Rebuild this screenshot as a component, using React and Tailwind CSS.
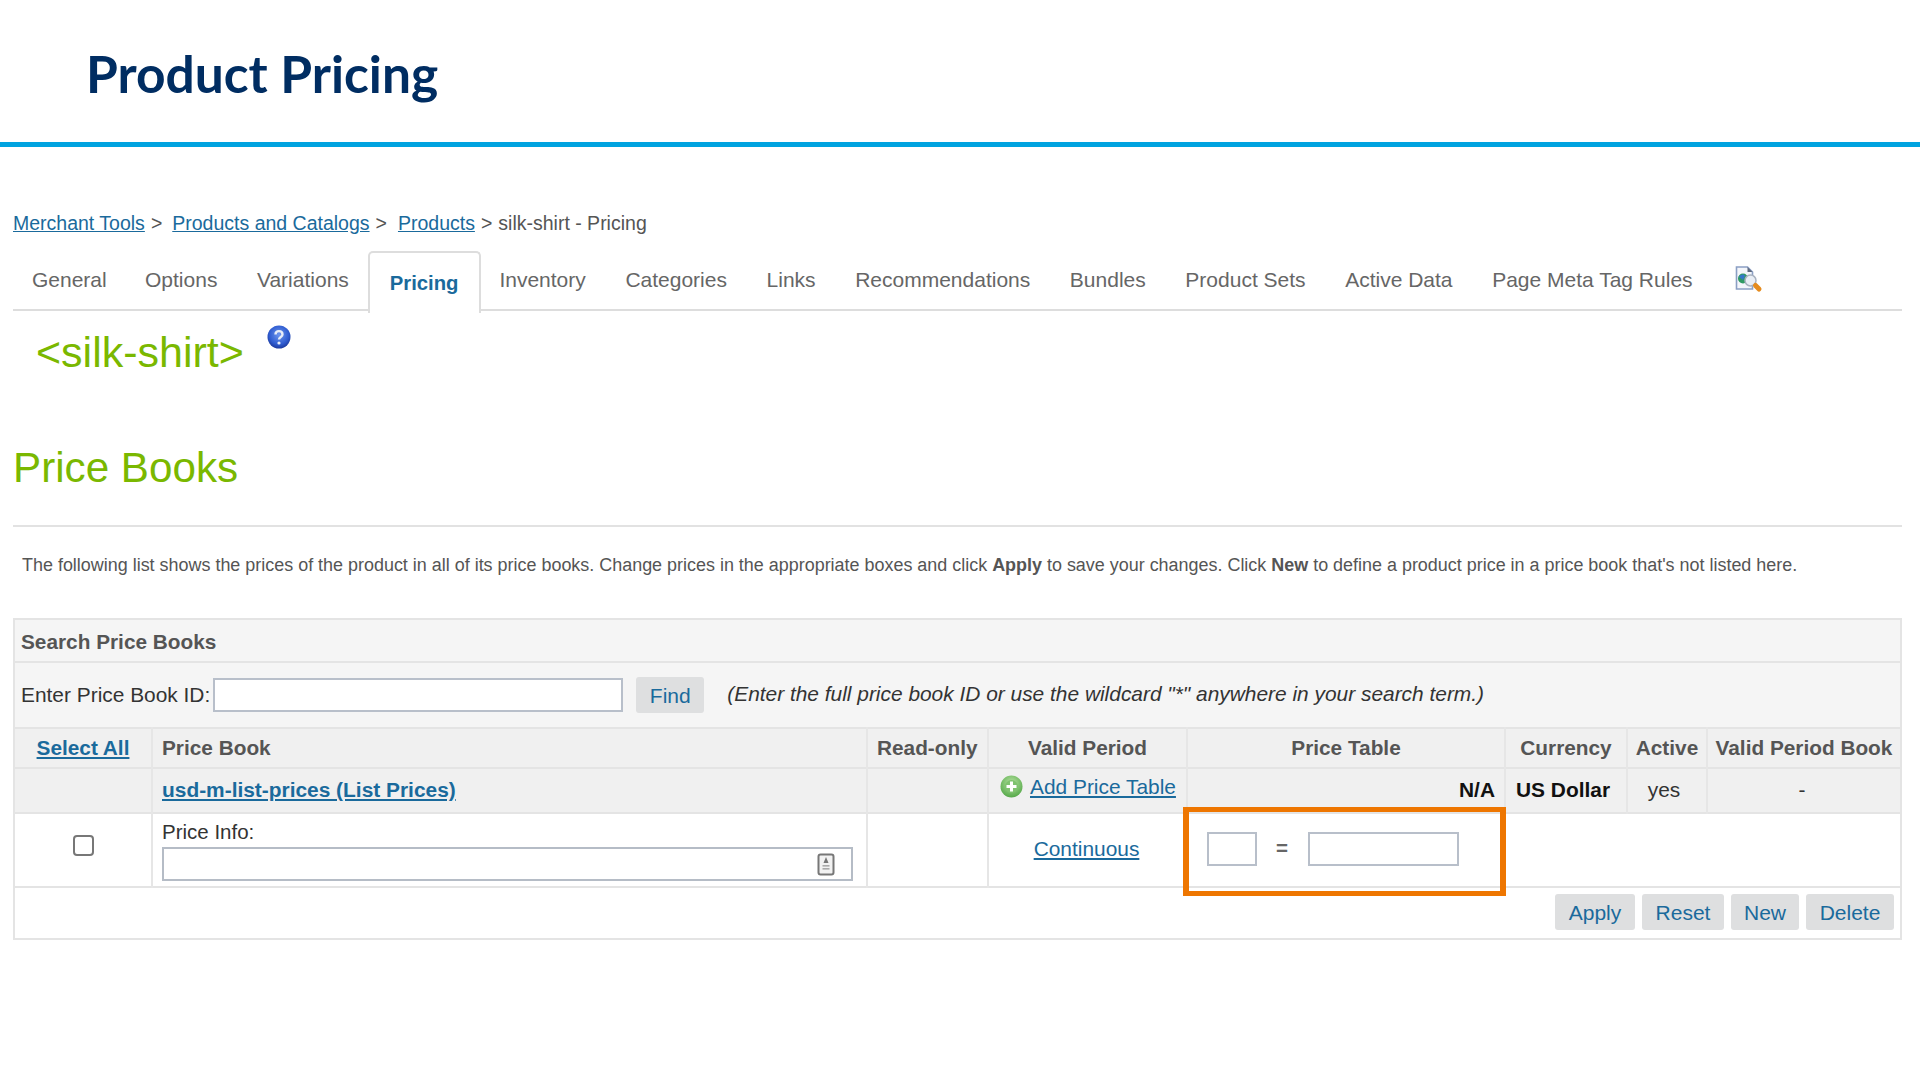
const ff = { fontFamily: '"Liberation Sans", Arial, sans-serif' };

const tabs = [
  ["General", 0],
  ["Options", 0],
  ["Variations", 0],
  ["Pricing", 1],
  ["Inventory", 0],
  ["Categories", 0],
  ["Links", 0],
  ["Recommendations", 0],
  ["Bundles", 0],
  ["Product Sets", 0],
  ["Active Data", 0],
  ["Page Meta Tag Rules", 0],
];

function LookupIcon() {
  return (
    <svg width="28" height="27" viewBox="0 0 28 27">
      <path d="M1.500 1h11l5 5v17h-16z" fill="#f4f6fb" stroke="#8b9fc4" strokeWidth="1.600" />
      <path d="M12.500 1v5h5z" fill="#5f6b80" />
      <circle cx="8" cy="12.500" r="5" fill="#2f9a63" />
      <path d="M4 11c2-3 5-3 6-1l-2 4z" fill="#3577c9" />
      <circle cx="15.500" cy="14.500" r="5.500" fill="#e9eef5" stroke="#a9b2c0" strokeWidth="1.500" />
      <path d="M20.500 19.500l3.500 3.500" stroke="#e58b1e" strokeWidth="5" strokeLinecap="round" />
    </svg>
  );
}

function HelpIcon() {
  return (
    <svg width="24" height="24" viewBox="0 0 24 24">
      <defs>
        <radialGradient id="hb" cx="50%" cy="40%" r="60%">
          <stop offset="0%" stopColor="#6d96ee" />
          <stop offset="70%" stopColor="#2f5cd0" />
          <stop offset="100%" stopColor="#1c3a9e" />
        </radialGradient>
      </defs>
      <circle cx="12" cy="12" r="11.500" fill="url(#hb)" />
      <path d="M8.500 9.500c0-4.500 7-4.500 7 0 0 2.500-3.500 2.500-3.500 5" fill="none" stroke="#e8edf8" strokeWidth="2.400" />
      <circle cx="12" cy="18" r="1.600" fill="#e8edf8" />
    </svg>
  );
}

function PlusIcon() {
  return (
    <svg width="23" height="23" viewBox="0 0 23 23" className="shrink-0">
      <defs>
        <radialGradient id="pg" cx="50%" cy="35%" r="65%">
          <stop offset="0%" stopColor="#b5e2a0" />
          <stop offset="100%" stopColor="#56a94a" />
        </radialGradient>
      </defs>
      <circle cx="11.500" cy="11.500" r="11" fill="url(#pg)" />
      <circle cx="11.500" cy="11.500" r="6.500" fill="#7fc26f" />
      <path d="M11.500 6.500v10M6.500 11.500h10" stroke="#fff" strokeWidth="3" />
    </svg>
  );
}

function FieldIcon() {
  return (
    <svg width="18" height="23" viewBox="0 0 18 23">
      <rect x="1.500" y="1.500" width="15" height="20" rx="2" fill="#f2f2f2" stroke="#777" strokeWidth="2" />
      <path d="M9 4l2.500 6h-5z" fill="#777" />
      <rect x="5.500" y="12" width="7" height="1.600" fill="#aaa" />
      <rect x="5.500" y="15" width="7" height="1.600" fill="#aaa" />
    </svg>
  );
}

function Btn({ children, className }) {
  return (
    <button className={"h-[36px] rounded-[3px] bg-[#dedfe0] text-[21px] leading-none text-[#1a6a9c] " + className}>
      {children}
    </button>
  );
}

function Th({ children, className = "" }) {
  return (
    <th className={"border-x-2 border-[#e6e6e6] p-0 text-[20.800px] font-bold leading-none text-[#555555] " + className}>
      {children}
    </th>
  );
}

function Td({ children, className = "" }) {
  return <td className={"border-x-2 border-[#e6e6e6] p-0 align-middle " + className}>{children}</td>;
}

export default function App() {
  return (
    <div className="h-[1080px] w-[1920px] overflow-hidden bg-white" style={ff}>
      <header className="h-[147px] border-b-[5px] border-[#00a3e0] pl-[86px] pt-[41px]">
        <h1
          className="text-[51.500px] font-bold leading-[64px] text-[#002d62]"
          style={{ fontFamily: 'Lato, "Open Sans", sans-serif' }}
        >
          Product Pricing
        </h1>
      </header>

      <main className="pl-[13px] pr-[18px]">
        <nav className="mt-[65px] flex h-[24px] items-center text-[19.500px] leading-none text-[#555555]">
          <a className="text-[#1a6a9c] underline">Merchant Tools</a>
          <span className="ml-[6px]">&gt;</span>
          <a className="ml-[10px] text-[#1a6a9c] underline">Products and Catalogs</a>
          <span className="ml-[6px]">&gt;</span>
          <a className="ml-[11px] text-[#1a6a9c] underline">Products</a>
          <span className="ml-[6px]">&gt;</span>
          <span className="ml-[6px]">silk-shirt - Pricing</span>
        </nav>

        <div className="mt-[15px] flex h-[60px] items-stretch border-b-2 border-[#dddddd] pl-[19px]">
          {tabs.map(([t, active]) =>
            active ? (
              <div
                key={t}
                className="mx-[-1px] mb-[-2px] flex h-[62px] w-[113px] items-center justify-center rounded-t-[5px] border-2 border-b-0 border-[#dddddd] bg-white text-[20.300px] font-bold text-[#1a6a9c]"
              >
                {t}
              </div>
            ) : (
              <div
                key={t}
                className="flex items-center px-[19.800px] pb-[1px] text-[21px] text-[#666666] first:pl-0 first:pr-[18.500px]"
              >
                {t}
              </div>
            )
          )}
          <div className="ml-[23px] flex items-center pb-[1px]">
            <LookupIcon />
          </div>
        </div>

        <div className="flex h-[69px] items-start pl-[23px] pt-[14px]">
          <span className="text-[43px] leading-[54px] text-[#7ab800]">&lt;silk-shirt&gt;</span>
          <span className="ml-[23px]">
            <HelpIcon />
          </span>
        </div>

        <h2 className="mt-[62px] text-[42.200px] leading-[52px] text-[#7ab800]">Price Books</h2>

        <div className="mt-[31px] h-[2px] bg-[#e2e2e2]" />

        <p className="ml-[9px] mt-[26px] whitespace-nowrap text-[17.960px] leading-[24px] text-[#555555]">
          The following list shows the prices of the product in all of its price books. Change prices in the appropriate
          boxes and click <b>Apply</b> to save your changes. Click <b>New</b> to define a product price in a price book
          that's not listed here.
        </p>

        <section className="relative mt-[41px] w-[1889px] border-2 border-[#e4e4e4]">
          <div className="flex h-[43px] items-center border-b-2 border-[#e4e4e4] bg-[#f5f5f5] pl-[6px] pt-[3px] text-[20.800px] font-bold text-[#555555]">
            Search Price Books
          </div>
          <div className="flex h-[64px] items-center bg-[#f5f5f5] pl-[6px] text-[20.900px] text-[#333333]">
            <span>Enter Price Book ID:</span>
            <input className="ml-[3px] h-[34px] w-[410px] border-2 border-[#b8bfca] bg-white" />
            <Btn className="ml-[13px] w-[68px]">Find</Btn>
            <i className="ml-[23px] pb-[2px] text-[20.900px] text-[#333333]">
              (Enter the full price book ID or use the wildcard "*" anywhere in your search term.)
            </i>
          </div>

          <table className="w-[1885px] table-fixed border-collapse">
            <colgroup>
              <col className="w-[137px]" />
              <col className="w-[715px]" />
              <col className="w-[121px]" />
              <col className="w-[199px]" />
              <col className="w-[318px]" />
              <col className="w-[122px]" />
              <col className="w-[80px]" />
              <col className="w-[193px]" />
            </colgroup>
            <thead>
              <tr className="h-[40px] border-y-2 border-[#e4e4e4] bg-[#f0f0f0]">
                <Th className="border-l-0 text-center">
                  <a className="text-[#1a6a9c] underline">Select All</a>
                </Th>
                <Th className="pl-[9px] text-left">Price Book</Th>
                <Th className="pl-[9px] text-left">Read-only</Th>
                <Th className="text-center">Valid Period</Th>
                <Th className="text-center">Price Table</Th>
                <Th className="text-center">Currency</Th>
                <Th className="text-center">Active</Th>
                <Th className="border-r-0 text-center">Valid Period Book</Th>
              </tr>
            </thead>
            <tbody>
              <tr className="h-[45px] border-b-2 border-[#e4e4e4] bg-[#f0f0f0]">
                <Td className="border-l-0" />
                <Td className="pb-[1px] pl-[9px] text-[20.900px] font-bold text-[#1a6a9c]">
                  <a className="underline">usd-m-list-prices (List Prices)</a>
                </Td>
                <Td />
                <Td className="pl-[11px]">
                  <div className="flex items-center gap-[7px] pb-[7px] text-[20.900px] text-[#1a6a9c]">
                    <PlusIcon />
                    <a className="underline">Add Price Table</a>
                  </div>
                </Td>
                <Td className="pb-[1px] pr-[9px] text-right text-[20.900px] font-bold text-[#111111]">N/A</Td>
                <Td className="pb-[1px] pl-[10px] text-[20.900px] font-bold text-[#111111]">US Dollar</Td>
                <Td className="pb-[1px] pr-[6px] text-center text-[20.900px] text-[#333333]">yes</Td>
                <Td className="border-r-0 pb-[1px] pr-[4px] text-center text-[20.900px] text-[#333333]">-</Td>
              </tr>
              <tr className="h-[74px] border-b-2 border-[#e4e4e4] bg-white">
                <Td className="border-l-0 pb-[10px] text-center">
                  <input
                    type="checkbox"
                    className="inline-block size-[21px] appearance-none rounded-[4px] border-2 border-[#777777] bg-white align-middle"
                  />
                </Td>
                <Td className="pl-[9px] pr-[13px] pt-[6px] align-top">
                  <div className="text-[20.500px] leading-[24px] text-[#333333]">Price Info:</div>
                  <div className="mt-[3px] flex h-[34px] items-center justify-end border-2 border-[#b5bcc6] pr-[16px]">
                    <FieldIcon />
                  </div>
                </Td>
                <Td />
                <Td className="pb-[2px] pr-[2px] text-center text-[20.900px] text-[#1a6a9c]">
                  <a className="underline">Continuous</a>
                </Td>
                <Td className="border-r-0">
                  <div className="flex items-center pb-[3px] pl-[19px]">
                    <input className="h-[34px] w-[50px] border-2 border-[#b8bfca] bg-white" />
                    <span className="ml-[19px] w-[32px] text-[20.500px] font-bold leading-none text-[#666666]">=</span>
                    <input className="h-[34px] w-[151px] border-2 border-[#b8bfca] bg-white" />
                  </div>
                </Td>
                <td colSpan={3} className="border-0 p-0" />
              </tr>
            </tbody>
          </table>

          <div className="flex h-[50px] items-start justify-end gap-[7px] pr-[6px] pt-[6px]">
            <Btn className="w-[80px]">Apply</Btn>
            <Btn className="w-[82px]">Reset</Btn>
            <Btn className="w-[68px]">New</Btn>
            <Btn className="w-[88px]">Delete</Btn>
          </div>

          <div className="absolute left-[1168px] top-[187px] h-[89px] w-[323px] border-x-[6px] border-y-[5px] border-[#ee7600]" />
        </section>
      </main>
    </div>
  );
}
